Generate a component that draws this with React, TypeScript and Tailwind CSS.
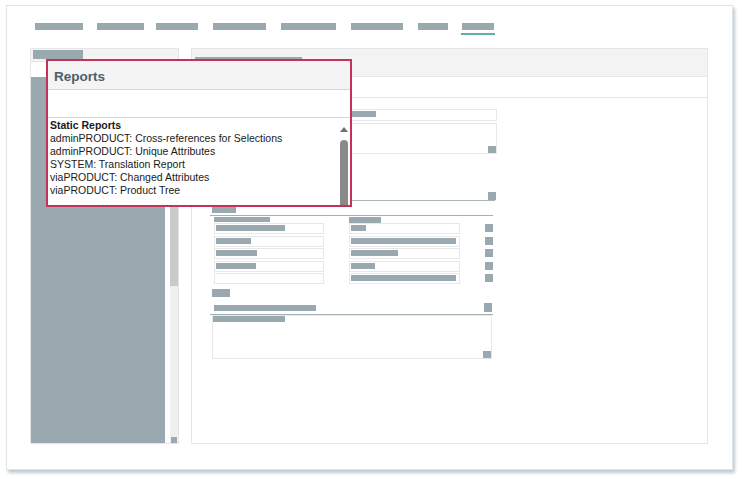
import React from 'react'

const BAR = 'bg-[#9aa9af]'

const ROWS = [
  { left: 'w-[69px]', right: 'w-[15px]', mt: 'mt-0' },
  { left: 'w-[35px]', right: 'w-[105px]', mt: 'mt-[2px]' },
  { left: 'w-[41px]', right: 'w-[47px]', mt: 'mt-[1px]' },
  { left: 'w-[40px]', right: 'w-[24px]', mt: 'mt-[2px]' },
  { left: '', right: 'w-[105px]', mt: 'mt-[1px]' },
]

const REPORTS = [
  'adminPRODUCT: Cross-references for Selections',
  'adminPRODUCT: Unique Attributes',
  'SYSTEM: Translation Report',
  'viaPRODUCT: Changed Attributes',
  'viaPRODUCT: Product Tree',
]

function Nav() {
  return (
    <div className="h-[42px] pt-[17px] pl-[28px] flex items-start">
      <div className={`h-[7px] w-[48px] ${BAR}`} />
      <div className={`h-[7px] w-[47px] ml-[14px] ${BAR}`} />
      <div className={`h-[7px] w-[42px] ml-[12px] ${BAR}`} />
      <div className={`h-[7px] w-[53px] ml-[15px] ${BAR}`} />
      <div className={`h-[7px] w-[55px] ml-[15px] ${BAR}`} />
      <div className={`h-[7px] w-[52px] ml-[15px] ${BAR}`} />
      <div className={`h-[7px] w-[30px] ml-[15px] ${BAR}`} />
      {/* active tab */}
      <div className="ml-[13px] px-[1px] pb-[3px] border-b-2 border-[#5eaead]">
        <div className={`h-[7px] w-[32px] ${BAR}`} />
      </div>
    </div>
  )
}

function LeftPanel() {
  return (
    <div className="w-[149px] h-[396px] border border-[#e6e6e6] flex flex-col">
      <div className="h-[13px] bg-[#f3f3f3] border-b border-[#e6e6e6] shrink-0">
        <div className={`mt-[1px] ml-[2px] h-[9px] w-[50px] ${BAR}`} />
      </div>
      <div className="h-[15px] shrink-0" />
      <div className="flex flex-1">
        <div className={`w-[134px] ${BAR}`} />
        <div className="ml-[5px] w-[8px] bg-[#efefef] flex flex-col justify-between">
          <div className="h-[209px] bg-[#cacaca]" />
          <div className={`mx-[1px] h-[6px] ${BAR}`} />
        </div>
      </div>
    </div>
  )
}

function Form() {
  return (
    <div className="ml-[18px] mt-[11px] w-[287px]">
      <div className="h-[12px] border border-[#e8e8e8]">
        <div className={`mt-[1px] ml-[1px] h-[6px] w-[164px] ${BAR}`} />
      </div>
      <div className="mt-[2px] h-[31px] border border-[#e8e8e8] flex items-end justify-end">
        <div className={`w-[8px] h-[7px] ${BAR}`} />
      </div>
      <div className="h-[47px] w-[285px] border-b border-[#a9b5ba] flex items-end justify-end">
        <div className={`mr-[-1px] w-[8px] h-[8px] ${BAR}`} />
      </div>

      <div className={`mt-[6px] ml-[2px] h-[6px] w-[24px] ${BAR}`} />
      <div className="mt-[2px] w-[283px] h-[1px] bg-[#a3b0b5]" />

      <div className="mt-[1px] flex">
        <div className={`ml-[4px] h-[5px] w-[56px] ${BAR}`} />
        <div className={`ml-[79px] h-[6px] w-[32px] ${BAR}`} />
      </div>
      <div>
        {ROWS.map((r, i) => (
          <div key={i} className={`flex items-start ${r.mt}`}>
            <div className="ml-[4px] w-[110px] h-[11px] border border-[#e8e8e8]">
              {r.left && <div className={`mt-[1px] ml-[1px] h-[6px] ${r.left} ${BAR}`} />}
            </div>
            <div className="ml-[25px] w-[111px] h-[11px] border border-[#e8e8e8]">
              <div className={`mt-[1px] ml-[1px] h-[6px] ${r.right} ${BAR}`} />
            </div>
            <div className={`ml-[25px] mt-[1px] w-[8px] h-[8px] ${BAR}`} />
          </div>
        ))}
      </div>

      <div className={`mt-[5px] ml-[2px] h-[8px] w-[18px] ${BAR}`} />
      <div className="mt-[6px] flex items-end w-[283px]">
        <div className={`ml-[4px] mb-[1px] h-[6px] w-[102px] ${BAR}`} />
        <div className={`ml-auto mr-[1px] h-[9px] w-[8px] ${BAR}`} />
      </div>
      <div className="mt-[2px] w-[283px] h-[1px] bg-[#a3b0b5]" />
      <div className="ml-[2px] w-[280px] h-[44px] border border-[#e8e8e8] flex flex-col justify-between">
        <div className={`h-[6px] w-[72px] ${BAR}`} />
        <div className={`self-end h-[7px] w-[8px] ${BAR}`} />
      </div>
    </div>
  )
}

function RightPanel() {
  return (
    <div className="ml-[12px] w-[517px] h-[396px] border border-[#e6e6e6]">
      <div className="h-[28px] bg-[#f3f3f3] border-b border-[#e6e6e6] pt-[8px]">
        <div className={`ml-[3px] h-[7px] w-[107px] ${BAR}`} />
      </div>
      <div className="h-[21px] border-b border-[#e6e6e6]" />
      <Form />
    </div>
  )
}

function ReportsPopup() {
  return (
    <div className="absolute left-[46px] top-[59px] w-[306px] h-[148px] border-2 border-[#c2335a] bg-white flex flex-col">
      <div className="h-[29px] shrink-0 bg-[#f4f4f4] border-b border-[#d6d6d6] pl-[6px] pt-[8px] text-[13.5px] leading-[16px] font-bold text-[#4b5e6e]">
        Reports
      </div>
      <div className="h-[28px] shrink-0 border-b border-[#d6d6d6]" />
      <div className="flex flex-1 overflow-hidden">
        <div className="flex-1 pl-[2px] pt-[1px] text-[10.5px] leading-[13px] text-[#1a1a1a]">
          <div className="font-bold">Static Reports</div>
          {REPORTS.map(r => (
            <div key={r}>{r}</div>
          ))}
        </div>
        <div className="w-[8px] mr-[2px] flex flex-col items-center">
          <div className="mt-[9px] w-0 h-0 border-l-[4px] border-r-[4px] border-b-[5px] border-l-transparent border-r-transparent border-b-[#707070]" />
          <div className="mt-[8px] w-[8px] flex-1 rounded-t-full bg-[#8a8a8a]" />
        </div>
      </div>
    </div>
  )
}

export default function App() {
  return (
    <div
      className="relative w-[742px] h-[479px] bg-white pt-[5px] pl-[6px]"
      style={{ fontFamily: '"Liberation Sans", Arial, sans-serif' }}
    >
      <div className="w-[727px] h-[465px] bg-white border border-[#dde3e6] shadow-[2px_3px_3px_rgba(140,160,170,0.55)]">
        <Nav />
        <div className="flex pl-[23px]">
          <LeftPanel />
          <RightPanel />
        </div>
      </div>
      <ReportsPopup />
    </div>
  )
}
